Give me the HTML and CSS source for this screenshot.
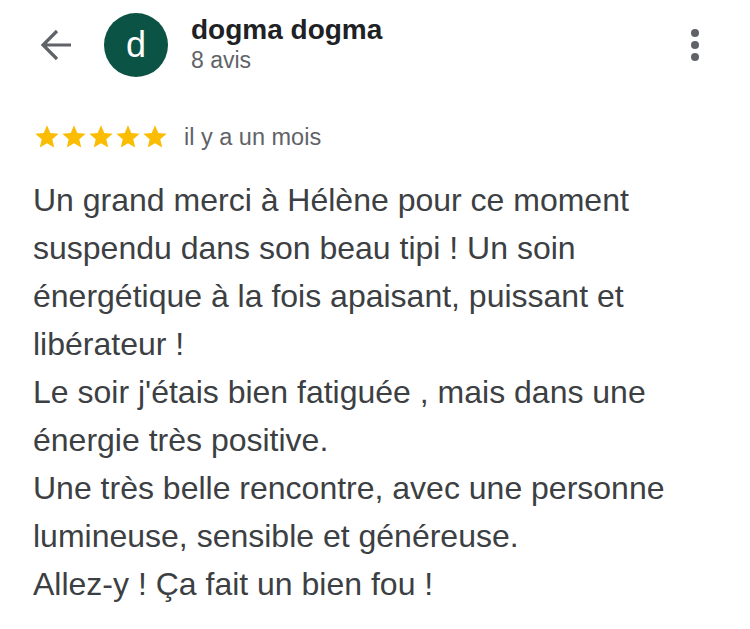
FILE: index.html
```html
<!DOCTYPE html>
<html lang="fr">
<head>
    <meta charset="UTF-8">
    <meta name="viewport" content="width=device-width, initial-scale=1.0">
    <title>Avis</title>
    <link rel="stylesheet" href="styles.css">
</head>
<body>

<div class="review">
    <div class="header">
        <button class="back" aria-label="Retour">
            <svg width="34" height="34" viewBox="0 0 34 34">
                <path d="M32 17H4 M18 3L4 17l14 14" fill="none" stroke="#5f6368" stroke-width="3.2"/>
            </svg>
        </button>
        <div class="avatar">d</div>
        <div class="author">
            <div class="name">dogma dogma</div>
            <div class="count">8 avis</div>
        </div>
        <button class="more" aria-label="Plus">
            <span class="dot"></span>
            <span class="dot"></span>
            <span class="dot"></span>
        </button>
    </div>

    <div class="meta">
        <div class="stars">
            <svg class="star" viewBox="0 0 24 24"><path d="M12 17.27L18.18 21l-1.64-7.03L22 9.24l-7.19-.61L12 2 9.19 8.63 2 9.24l5.46 4.73L5.82 21z"/></svg>
            <svg class="star" viewBox="0 0 24 24"><path d="M12 17.27L18.18 21l-1.64-7.03L22 9.24l-7.19-.61L12 2 9.19 8.63 2 9.24l5.46 4.73L5.82 21z"/></svg>
            <svg class="star" viewBox="0 0 24 24"><path d="M12 17.27L18.18 21l-1.64-7.03L22 9.24l-7.19-.61L12 2 9.19 8.63 2 9.24l5.46 4.73L5.82 21z"/></svg>
            <svg class="star" viewBox="0 0 24 24"><path d="M12 17.27L18.18 21l-1.64-7.03L22 9.24l-7.19-.61L12 2 9.19 8.63 2 9.24l5.46 4.73L5.82 21z"/></svg>
            <svg class="star" viewBox="0 0 24 24"><path d="M12 17.27L18.18 21l-1.64-7.03L22 9.24l-7.19-.61L12 2 9.19 8.63 2 9.24l5.46 4.73L5.82 21z"/></svg>
        </div>
        <span class="date">il y a un mois</span>
    </div>

    <p class="text">Un grand merci à Hélène pour ce moment<br>suspendu dans son beau tipi ! Un soin<br>énergétique à la fois apaisant, puissant et<br>libérateur !<br>Le soir j'étais bien fatiguée , mais dans une<br>énergie très positive.<br>Une très belle rencontre, avec une personne<br>lumineuse, sensible et généreuse.<br>Allez-y ! Ça fait un bien fou !</p>
</div>

</body>
</html>
```

FILE: styles.css
```css
body {
    font-family: "Liberation Sans", Arial, sans-serif;
    background-color: #fff;
    margin: 0;
}

.review {
    padding: 13px 0 0 33px;
}

.header {
    display: flex;
    align-items: center;
}

.back {
    background: none;
    border: none;
    padding: 0;
    margin-left: 6px;
    width: 34px;
    height: 34px;
    display: flex;
}

.avatar {
    width: 64px;
    height: 64px;
    border-radius: 50%;
    background-color: #0b5345;
    color: #fff;
    font-size: 36px;
    display: flex;
    justify-content: center;
    align-items: center;
    margin-left: 31px;
}

.author {
    margin-left: 23px;
    margin-top: -3px;
    flex: 1;
}

.name {
    font-size: 28px;
    line-height: 31px;
    font-weight: bold;
    color: #202124;
}

.count {
    font-size: 23px;
    line-height: 27px;
    color: #5f6368;
    margin-top: 2px;
}

.more {
    background: none;
    border: none;
    padding: 0;
    width: 10px;
    margin-right: 50px;
    display: flex;
    flex-direction: column;
    align-items: center;
    gap: 4px;
}

.dot {
    width: 8px;
    height: 8px;
    border-radius: 50%;
    background-color: #5f6368;
}

.meta {
    display: flex;
    align-items: center;
    margin-top: 46px;
}

.stars {
    display: flex;
}

.star {
    width: 28px;
    height: 28px;
    margin-right: -1px;
    fill: #fbbc04;
}

.date {
    font-size: 23.5px;
    color: #5f6368;
    margin-left: 16px;
}

.text {
    font-size: 32px;
    line-height: 48px;
    color: #3c4043;
    margin: 25px 0 0;
}
```
